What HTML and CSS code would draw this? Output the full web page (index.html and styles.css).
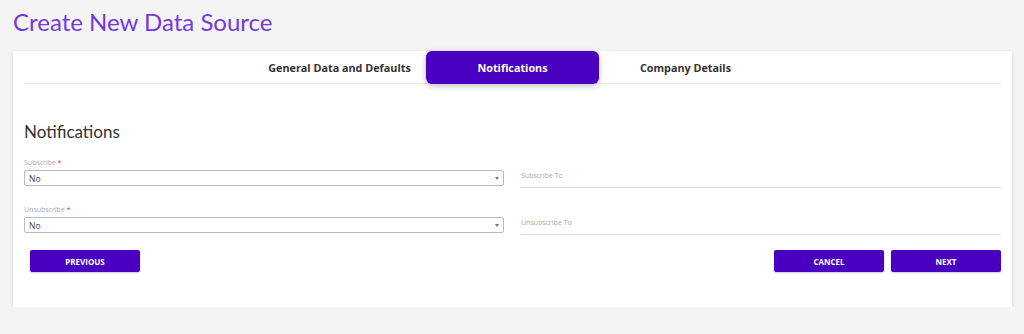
FILE: index.html
```html
<!DOCTYPE html>
<html lang="en">

<head>
    <meta charset="UTF-8">
    <meta name="viewport" content="width=device-width, initial-scale=1.0">
    <title>Create New Data Source</title>
    <link rel="stylesheet" href="styles.css">
</head>

<body>
    <h1 class="page-title">Create New Data Source</h1>

    <div class="card">
        <!-- Вкладки -->
        <div class="tabs">
            <div class="tab">General Data and Defaults</div>
            <div class="tab active">Notifications</div>
            <div class="tab">Company Details</div>
        </div>

        <h2 class="section-title">Notifications</h2>

        <div class="form-grid">
            <div class="field">
                <label class="field-label">Subscribe <span class="req">*</span></label>
                <div class="select">
                    <span>No</span>
                    <span class="caret"></span>
                </div>
            </div>
            <div class="field line-field">
                <div class="line-input">Subscribe To</div>
            </div>

            <div class="field">
                <label class="field-label">Unsubscribe <span class="req">*</span></label>
                <div class="select">
                    <span>No</span>
                    <span class="caret"></span>
                </div>
            </div>
            <div class="field line-field">
                <div class="line-input">Unsubscribe To</div>
            </div>
        </div>

        <div class="actions">
            <button class="btn">PREVIOUS</button>
            <div class="actions-right">
                <button class="btn">CANCEL</button>
                <button class="btn">NEXT</button>
            </div>
        </div>
    </div>
</body>

</html>
```

FILE: styles.css
```css
body {
    margin: 0;
    padding: 0 12px 0 13px;
    background-color: #f4f4f4;
    font-family: "Open Sans", sans-serif;
}

.page-title {
    margin: 0;
    padding-top: 8px;
    height: 51px;
    box-sizing: border-box;
    font-family: Lato, sans-serif;
    font-weight: 400;
    font-size: 24px;
    line-height: 28px;
    color: #7438e0;
}

.card {
    background-color: #fff;
    padding: 0 11px 35px;
    box-shadow: 0 1px 3px rgba(0, 0, 0, 0.18);
}

/* Вкладки */
.tabs {
    display: flex;
    justify-content: center;
    border-bottom: 1px solid #e6e6e6;
    height: 32px;
}

.tab {
    width: 173px;
    height: 33px;
    display: flex;
    align-items: center;
    justify-content: center;
    font-size: 10.8px;
    font-weight: 700;
    color: #333;
}

.tab.active {
    background-color: #4a00c0;
    color: #fff;
    border-radius: 6px;
    box-shadow: 0 2px 6px rgba(0, 0, 0, 0.25);
}

.section-title {
    margin: 38px 0 0;
    font-family: Lato, sans-serif;
    font-weight: 400;
    font-size: 17px;
    line-height: 20px;
    color: #333;
}

.form-grid {
    display: grid;
    grid-template-columns: 1fr 1fr;
    column-gap: 17px;
    row-gap: 19px;
    margin-top: 16px;
}

.field-label {
    display: block;
    font-size: 7px;
    line-height: 10px;
    color: #aaa;
    margin-bottom: 2px;
}

.req {
    color: #e03030;
}

.select {
    height: 16px;
    box-sizing: border-box;
    border: 1px solid #bbb;
    border-radius: 2px;
    display: flex;
    align-items: center;
    justify-content: space-between;
    padding: 0 4px;
    font-size: 8.5px;
    color: #444;
}

.caret {
    width: 0;
    height: 0;
    border-left: 2px solid transparent;
    border-right: 2px solid transparent;
    border-top: 3px solid #777;
}

.line-field {
    display: flex;
    align-items: flex-end;
}

.line-input {
    flex: 1;
    font-size: 7px;
    color: #aaa;
    padding-bottom: 7px;
    border-bottom: 1px solid #ddd;
    margin-bottom: -2px;
}

.actions {
    display: flex;
    justify-content: space-between;
    margin-top: 17px;
    padding-left: 6px;
}

.actions-right {
    display: flex;
    gap: 7px;
}

.btn {
    width: 110px;
    height: 22px;
    border: none;
    border-radius: 2px;
    background-color: #4a00c0;
    color: #fff;
    font-family: "Open Sans", sans-serif;
    font-size: 8px;
    font-weight: 700;
    cursor: pointer;
    box-shadow: 0 1px 2px rgba(0, 0, 0, 0.2);
}
```
